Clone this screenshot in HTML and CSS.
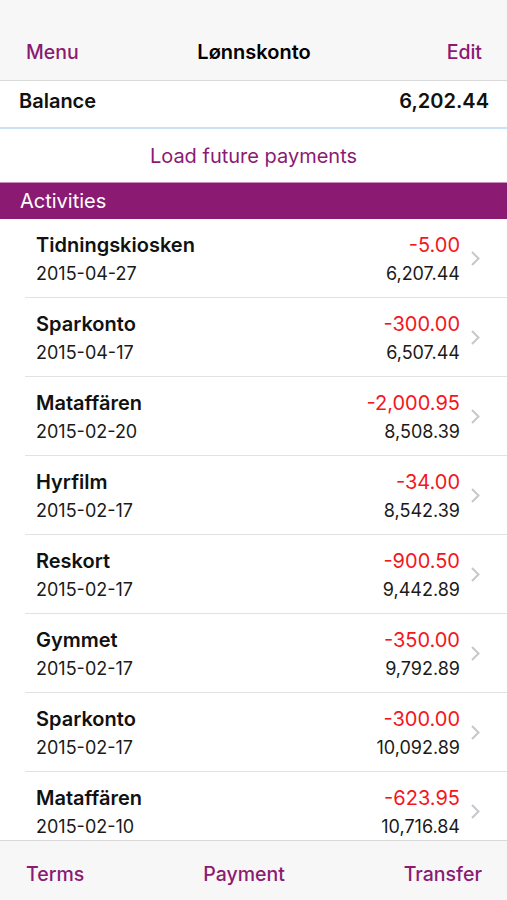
FILE: index.html
```html
<!DOCTYPE html>
<html lang="en">
<head>
    <meta charset="UTF-8">
    <title>Lønnskonto</title>
    <link rel="stylesheet" href="styles.css">
</head>
<body>
    <div class="screen">
        <div class="navbar">
            <a class="nav-btn">Menu</a>
            <div class="nav-title">Lønnskonto</div>
            <a class="nav-btn right">Edit</a>
        </div>
        <div class="balance">
            <span>Balance</span>
            <span>6,202.44</span>
        </div>
        <div class="load-row">Load future payments</div>
        <div class="section-head">Activities</div>
        <div class="list">
            <div class="item">
                <div class="item-main">
                    <div class="line"><span class="name">Tidningskiosken</span><span class="amount">-5.00</span></div>
                    <div class="line"><span class="date">2015-04-27</span><span class="total">6,207.44</span></div>
                </div>
                <svg class="chev" width="9" height="15" viewBox="0 0 9 15"><path d="M1 1l6.5 6.5L1 14" fill="none" stroke="#c7c7cc" stroke-width="2"/></svg>
            </div>
            <div class="item">
                <div class="item-main">
                    <div class="line"><span class="name">Sparkonto</span><span class="amount">-300.00</span></div>
                    <div class="line"><span class="date">2015-04-17</span><span class="total">6,507.44</span></div>
                </div>
                <svg class="chev" width="9" height="15" viewBox="0 0 9 15"><path d="M1 1l6.5 6.5L1 14" fill="none" stroke="#c7c7cc" stroke-width="2"/></svg>
            </div>
            <div class="item">
                <div class="item-main">
                    <div class="line"><span class="name">Mataffären</span><span class="amount">-2,000.95</span></div>
                    <div class="line"><span class="date">2015-02-20</span><span class="total">8,508.39</span></div>
                </div>
                <svg class="chev" width="9" height="15" viewBox="0 0 9 15"><path d="M1 1l6.5 6.5L1 14" fill="none" stroke="#c7c7cc" stroke-width="2"/></svg>
            </div>
            <div class="item">
                <div class="item-main">
                    <div class="line"><span class="name">Hyrfilm</span><span class="amount">-34.00</span></div>
                    <div class="line"><span class="date">2015-02-17</span><span class="total">8,542.39</span></div>
                </div>
                <svg class="chev" width="9" height="15" viewBox="0 0 9 15"><path d="M1 1l6.5 6.5L1 14" fill="none" stroke="#c7c7cc" stroke-width="2"/></svg>
            </div>
            <div class="item">
                <div class="item-main">
                    <div class="line"><span class="name">Reskort</span><span class="amount">-900.50</span></div>
                    <div class="line"><span class="date">2015-02-17</span><span class="total">9,442.89</span></div>
                </div>
                <svg class="chev" width="9" height="15" viewBox="0 0 9 15"><path d="M1 1l6.5 6.5L1 14" fill="none" stroke="#c7c7cc" stroke-width="2"/></svg>
            </div>
            <div class="item">
                <div class="item-main">
                    <div class="line"><span class="name">Gymmet</span><span class="amount">-350.00</span></div>
                    <div class="line"><span class="date">2015-02-17</span><span class="total">9,792.89</span></div>
                </div>
                <svg class="chev" width="9" height="15" viewBox="0 0 9 15"><path d="M1 1l6.5 6.5L1 14" fill="none" stroke="#c7c7cc" stroke-width="2"/></svg>
            </div>
            <div class="item">
                <div class="item-main">
                    <div class="line"><span class="name">Sparkonto</span><span class="amount">-300.00</span></div>
                    <div class="line"><span class="date">2015-02-17</span><span class="total">10,092.89</span></div>
                </div>
                <svg class="chev" width="9" height="15" viewBox="0 0 9 15"><path d="M1 1l6.5 6.5L1 14" fill="none" stroke="#c7c7cc" stroke-width="2"/></svg>
            </div>
            <div class="item">
                <div class="item-main">
                    <div class="line"><span class="name">Mataffären</span><span class="amount">-623.95</span></div>
                    <div class="line"><span class="date">2015-02-10</span><span class="total">10,716.84</span></div>
                </div>
                <svg class="chev" width="9" height="15" viewBox="0 0 9 15"><path d="M1 1l6.5 6.5L1 14" fill="none" stroke="#c7c7cc" stroke-width="2"/></svg>
            </div>
        </div>
        <div class="tabbar">
            <a class="nav-btn">Terms</a>
            <a class="nav-btn">Payment</a>
            <a class="nav-btn">Transfer</a>
        </div>
    </div>
</body>
</html>
```

FILE: styles.css
```css
body {
    margin: 0;
    font-family: Inter, "Liberation Sans", sans-serif;
    background: #fff;
    color: #111;
}

.screen {
    width: 507px;
    height: 900px;
    display: flex;
    flex-direction: column;
    overflow: hidden;
}

.navbar {
    height: 56px;
    padding: 24px 25px 0 26px;
    flex-shrink: 0;
    display: grid;
    grid-template-columns: 1fr auto 1fr;
    align-items: center;
    background: #f7f7f7;
    border-bottom: 1px solid #d9d9d9;
}

.navbar .right {
    text-align: right;
}

.nav-btn {
    color: #8b1a73;
    font-size: 19.5px;
    font-weight: 500;
}

.nav-title {
    font-size: 20px;
    font-weight: 600;
    color: #000;
}

.balance {
    height: 40px;
    padding: 0 18px 6px 19px;
    flex-shrink: 0;
    display: flex;
    align-items: center;
    justify-content: space-between;
    font-size: 20px;
    font-weight: 600;
    border-bottom: 2px solid #c8e1f6;
}

.load-row {
    height: 53px;
    flex-shrink: 0;
    display: flex;
    align-items: center;
    justify-content: center;
    color: #8b1a73;
    font-size: 20px;
}

.section-head {
    height: 36px;
    padding-left: 20px;
    flex-shrink: 0;
    display: flex;
    align-items: center;
    background: #8b1a73;
    border-top: 1px solid #c98fbc;
    color: #fff;
    font-size: 20px;
}

.list {
    flex: 1;
    overflow: hidden;
}

.item {
    height: 78px;
    margin-left: 25px;
    padding: 0 27px 0 11px;
    flex-shrink: 0;
    display: flex;
    align-items: center;
    border-bottom: 1px solid #e2e2e2;
}

.item-main {
    flex: 1;
    margin-right: 11px;
}

.line {
    display: flex;
    justify-content: space-between;
    align-items: baseline;
}

.line + .line {
    margin-top: 6px;
}

.name {
    font-size: 20px;
    font-weight: 600;
}

.amount {
    font-size: 20px;
    color: #f4161d;
}

.date, .total {
    font-size: 18px;
    color: #1a1a1a;
}

.tabbar {
    height: 53px;
    padding: 6px 25px 0 26px;
    flex-shrink: 0;
    display: flex;
    align-items: center;
    justify-content: space-between;
    background: #f7f7f7;
    border-top: 1px solid #d9d9d9;
}
```
